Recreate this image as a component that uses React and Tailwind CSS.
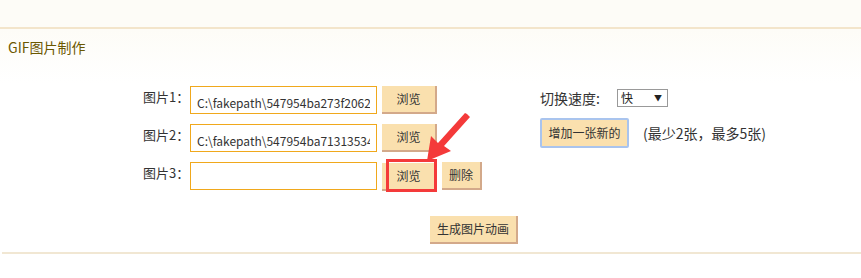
const FONT = { fontFamily: '"Microsoft YaHei", "Noto Sans CJK SC", "Noto Sans", sans-serif' };

function BrowseButton({ highlight }) {
  const btn = (
    <button className="h-[28px] w-[55px] bg-[#fae0ae] border-r-2 border-b-2 border-[#d3a98a] text-[12px] text-[#333]">
      浏览
    </button>
  );
  if (!highlight) return btn;
  return (
    <div className="relative">
      {btn}
      <div className="absolute left-[4px] top-[-3px] w-[51px] h-[33px] border-[3px] border-[#f43a3a] pointer-events-none" />
    </div>
  );
}

function FileRow({ label, value, highlight, canDelete }) {
  return (
    <div className="flex items-center h-[28px]">
      <span className="w-[47px] text-[13px] text-[#333] -mt-[6px]">{label}</span>
      <input
        readOnly
        value={value}
        className="h-[28px] w-[187px] border border-[#f0a81c] bg-white px-[6px] pt-[4px] text-[12px] text-[#333] outline-none"
      />
      <div className="ml-[5px] flex items-center gap-[5px]">
        <BrowseButton highlight={highlight} />
        {canDelete && (
          <button className="h-[28px] w-[40px] bg-[#fae0ae] border-r-2 border-b-2 border-[#d3a98a] text-[12px] text-[#333]">
            删除
          </button>
        )}
      </div>
    </div>
  );
}

export default function App() {
  return (
    <div className="relative w-[861px] h-[278px] bg-white overflow-hidden" style={FONT}>
      <div className="h-[29px] bg-[#fdfcf7] border-b-2 border-[#f3e5cb]" />
      <div className="bg-gradient-to-b from-[#fdfcf7] to-white h-[55px]">
        <div className="pl-[8px] pt-[8px] text-[14px] text-[#6b5800]">GIF图片制作</div>
      </div>

      <div className="flex pl-[143px] pt-[2px]">
        <div className="flex flex-col gap-[10px] w-[375px]">
          <FileRow label="图片1：" value="C:\fakepath\547954ba273f2062.gif" />
          <FileRow label="图片2：" value="C:\fakepath\547954ba71313534.gif" />
          <FileRow label="图片3：" value="" highlight canDelete />
          <div className="pl-[287px] pt-[15px]">
            <button className="h-[28px] w-[88px] bg-[#fae0ae] border-r-2 border-b-2 border-[#d3a98a] text-[12px] text-[#333]">
              生成图片动画
            </button>
          </div>
        </div>

        <div className="ml-[22px] pt-[3px] flex flex-col">
          <div className="flex items-center h-[18px]">
            <span className="w-[77px] text-[14px] text-[#333]">切换速度:</span>
            <div className="h-[18px] w-[51px] border border-[#999] bg-white flex items-center justify-between pl-[3px] pr-[5px] text-[12px] text-[#222]">
              <span>快</span>
              <span className="text-[8px]">▼</span>
            </div>
          </div>
          <div className="flex items-center mt-[11px]">
            <button className="h-[30px] w-[89px] rounded-[2px] border-2 border-[#a9c4ee] bg-[#fae0ae] text-[12px] text-[#333]">
              增加一张新的
            </button>
            <span className="ml-[14px] text-[14px] text-[#333]">(最少2张，最多5张)</span>
          </div>
        </div>
      </div>

      <div className="absolute left-[2px] right-0 top-[252px] h-[2px] bg-[#f1e7d3]" />

      <svg className="absolute left-0 top-0 pointer-events-none" width="861" height="278">
        <polygon points="467,114 470,117 444,146 451,151 427,161 431,136 438,143 465,113" fill="#f43a3a" />
      </svg>
    </div>
  );
}
